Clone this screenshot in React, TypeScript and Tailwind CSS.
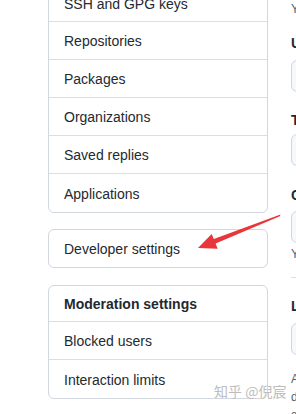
import React from "react";

const font = { fontFamily: '"Liberation Sans", Arial, sans-serif' };

function Row({ children, first = false }: { children: React.ReactNode; first?: boolean }) {
  return (
    <div
      className={`${first ? "h-[37px]" : "h-[38px]"} flex items-center pl-[15px] pt-[2px] text-[14px] text-[#24292f]`}
    >
      {children}
    </div>
  );
}

function Input({ className = "" }: { className?: string }) {
  return (
    <div className={`h-[32px] w-[280px] rounded-[6px] border border-[#d0d7de] bg-[#f6f8fa] ${className}`} />
  );
}

export default function App() {
  return (
    <div className="relative w-[296px] h-[414px] overflow-hidden bg-white" style={font}>
      <div className="flex">
        {/* Left navigation column */}
        <div className="ml-[48px] w-[220px] shrink-0 mt-[-16px]">
          <div className="rounded-[6px] border border-[#d0d7de] divide-y divide-[#d8dee4] bg-white">
            <Row first>SSH and GPG keys</Row>
            <Row>Repositories</Row>
            <Row>Packages</Row>
            <Row>Organizations</Row>
            <Row>Saved replies</Row>
            <Row>Applications</Row>
          </div>
          <div className="mt-[16px] rounded-[6px] border border-[#d0d7de] bg-white">
            <Row first>Developer settings</Row>
          </div>
          <div className="mt-[17px] rounded-[6px] border border-[#d0d7de] divide-y divide-[#d8dee4] bg-white">
            <div className="h-[36px] flex items-center pl-[15px] pt-[2px] text-[14px] font-semibold text-[#24292f]">
              Moderation settings
            </div>
            <Row>Blocked users</Row>
            <Row>Interaction limits</Row>
          </div>
        </div>

        {/* Right profile form column (clipped) */}
        <div className="ml-[23px] w-[300px] shrink-0">
          <p className="text-[12px] leading-[18px] text-[#57606a] whitespace-nowrap">
            You can @mention other users and organizations to link to them.
          </p>
          <div className="mt-[15px] text-[14px] leading-[21px] font-semibold text-[#24292f]">URL</div>
          <Input className="mt-[6px]" />
          <div className="mt-[18px] text-[14px] leading-[21px] font-semibold text-[#24292f]">Twitter username</div>
          <Input className="mt-[3px]" />
          <div className="mt-[19px] text-[14px] leading-[21px] font-semibold text-[#24292f]">Company</div>
          <Input className="mt-[5px]" />
          <p className="mt-[2px] text-[12px] leading-[18px] text-[#57606a] whitespace-nowrap">
            You can @mention your company's GitHub organization to link it.
          </p>
          <div className="mt-[14px] border-t border-[#d8dee4]" />
          <div className="mt-[18px] text-[14px] leading-[21px] font-semibold text-[#24292f]">Location</div>
          <Input className="mt-[6px]" />
          <p className="mt-[15px] text-[12px] leading-[18px] text-[#57606a] whitespace-nowrap">
            <span className="block">All of the fields on this page are optional and can be</span>
            <span className="block">deleted at any time, and by filling them out, you're</span>
            <span className="block">giving us consent to share this data wherever your</span>
          </p>
        </div>
      </div>

      {/* Red annotation arrow */}
      <svg className="absolute left-0 top-0 pointer-events-none" width="296" height="414" viewBox="0 0 296 414">
        <polygon
          points="198,248 211.7,233.9 213.8,239 280.5,214.6 279.8,216.2 215.6,243.6 217.7,248.7"
          fill="#e8363a"
        />
      </svg>

      {/* Watermark */}
      <div
        className="absolute left-[214px] top-[383px] text-[14px] leading-[16px] text-[#bdbdbd] whitespace-nowrap"
        style={{ fontFamily: '"Noto Sans CJK SC", "Noto Sans", sans-serif', textShadow: "0 0 1px #fff" }}
      >
        知乎 @倪宸
      </div>
    </div>
  );
}
